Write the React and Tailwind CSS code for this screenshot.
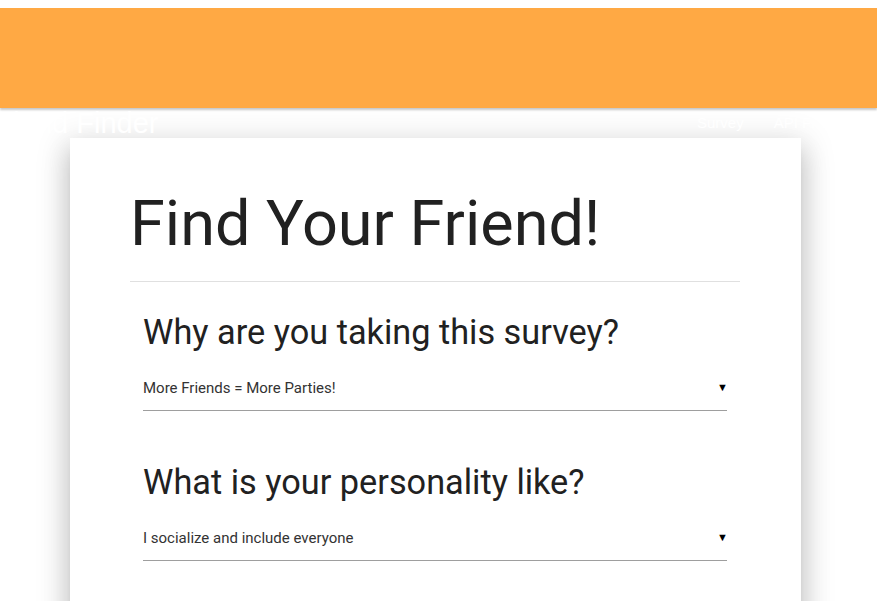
function Question({ title, answer }) {
  return (
    <div className="px-[13px]">
      <h4 className="text-[34.3px] leading-[40px] text-[#212121] mb-[17px]">{title}</h4>
      <div className="flex items-center justify-between h-[42px] border-b border-[#9e9e9e] text-[15px] text-[#333] pb-[3px]">
        <span>{answer}</span>
        <span className="text-[11px] text-black mr-[-1px]">▼</span>
      </div>
    </div>
  )
}

export default function App() {
  return (
    <div className="h-[601px] bg-white font-['Roboto',sans-serif] overflow-hidden">
      <div className="h-2" />
      <div className="h-[100px] bg-[#ffa944] shadow-[0_2px_2px_rgba(0,0,0,0.22)]" />
      <nav className="flex items-center h-[30px] text-white font-['Liberation_Sans',Arial,sans-serif] whitespace-nowrap">
        <span className="ml-[-14px] w-[696px] shrink-0 text-[29px] leading-[30px]">Friend Finder</span>
        <div className="flex shrink-0 text-[15px]">
          <a className="px-[15px]">Survey</a>
          <a className="px-[15px]">API Friends List</a>
        </div>
      </nav>
      <div className="ml-[70px] w-[731px] bg-white pl-[60px] pr-[61px] pt-[48px] pb-20 shadow-[0_16px_24px_2px_rgba(0,0,0,0.14),0_6px_30px_5px_rgba(0,0,0,0.12),0_8px_10px_-7px_rgba(0,0,0,0.2)]">
        <h1 className="text-[63px] leading-[76px] text-[#212121] pb-[19px] border-b border-[#e0e0e0]">Find Your Friend!</h1>
        <div className="pt-[30px] flex flex-col gap-[51px]">
          <Question title="Why are you taking this survey?" answer="More Friends = More Parties!" />
          <Question title="What is your personality like?" answer="I socialize and include everyone" />
        </div>
      </div>
    </div>
  )
}
